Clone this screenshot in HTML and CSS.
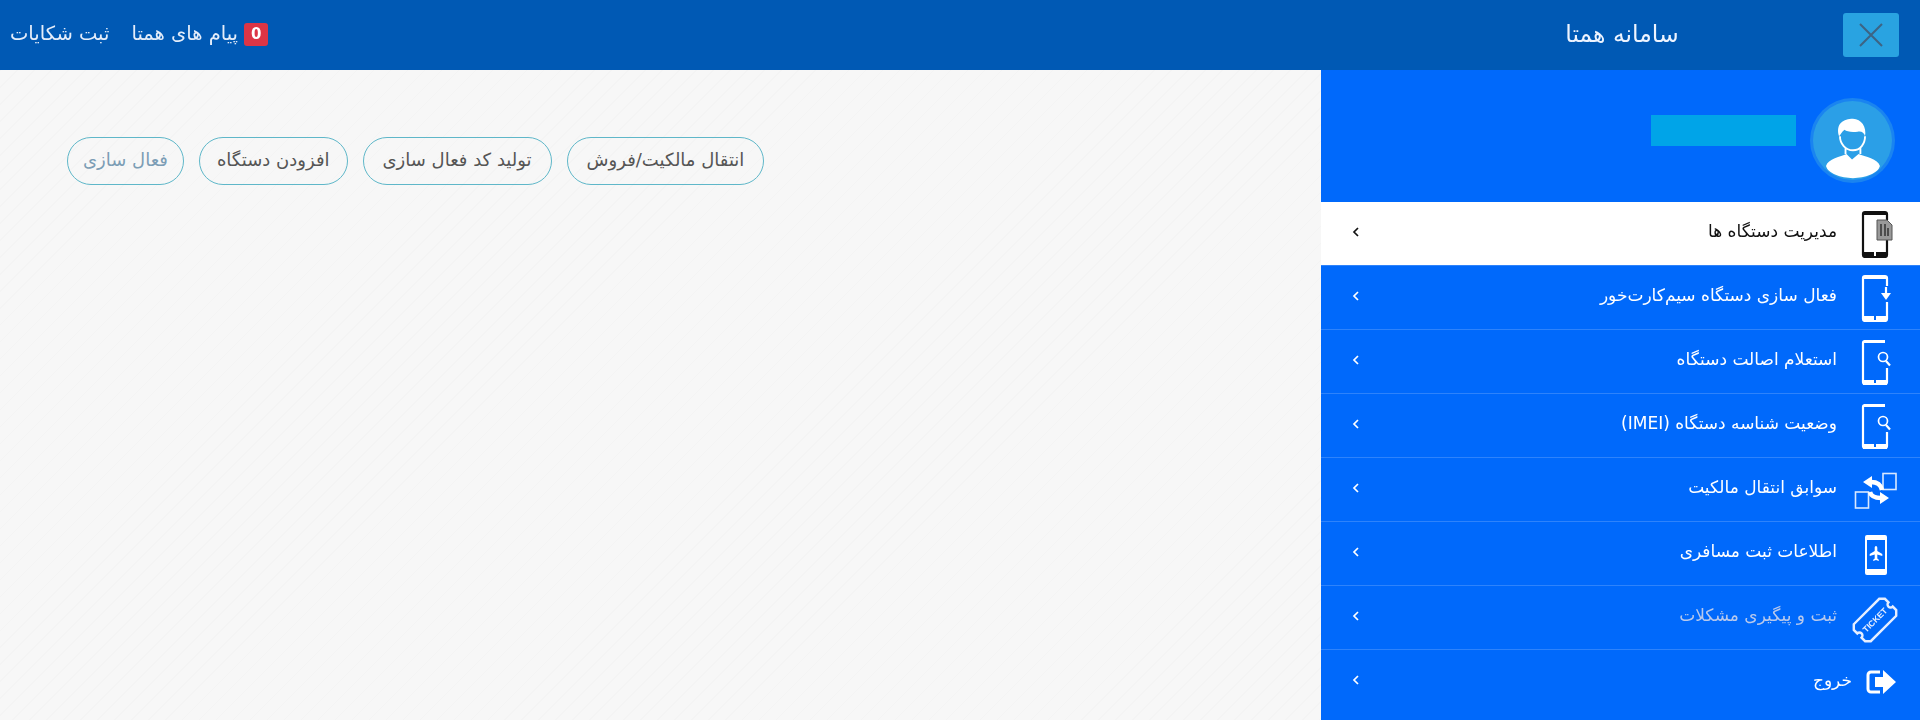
FILE: index.html
```html
<!DOCTYPE html>
<html lang="fa" dir="rtl">
<head>
    <meta charset="utf-8">
    <title>سامانه همتا</title>
    <link rel="stylesheet" href="styles.css">
</head>
<body>
    <svg class="icon-defs" aria-hidden="true">
        <symbol id="chevron" viewBox="0 0 8 12">
            <path d="M6 2 2 6l4 4" fill="none" stroke="currentColor" stroke-width="1.700"/>
        </symbol>
        <symbol id="phone-search" viewBox="0 0 48 48">
            <path d="M39 30v14a2 2 0 0 1-2 2H17a2 2 0 0 1-2-2V5a2 2 0 0 1 2-2h20" fill="none" stroke="currentColor" stroke-width="2.200"/>
            <path d="M16 2h21v3H16zM15 42h11v5H15zM28 42h11v5H28z" fill="currentColor"/>
            <circle cx="35" cy="19" r="4.500" fill="none" stroke="currentColor" stroke-width="1.700"/>
            <path d="m38 23 4 4.500" stroke="currentColor" stroke-width="2.200"/>
        </symbol>
    </svg>

    <header class="topbar">
        <div class="brand">
            <button class="close-btn" type="button" aria-label="بستن">
                <svg width="28" height="28" viewBox="0 0 28 28"><path d="M3 3l22 22M25 3 3 25" stroke="currentColor" stroke-width="2"/></svg>
            </button>
            <span class="brand-title">سامانه همتا</span>
        </div>
        <nav class="top-links">
            <a class="top-link" href="#"><span class="badge">0</span>پیام های همتا</a>
            <a class="top-link" href="#">ثبت شکایات</a>
        </nav>
    </header>

    <div class="layout">
        <aside class="sidebar">
            <div class="profile">
                <div class="avatar">
                    <svg viewBox="0 0 85 85">
                        <path d="M14 70c2-8 16-10 22-13l6 6 7-6c7 3 21 5 23 13-2 8-16 13-29 13S16 78 14 70z" fill="#fff"/>
                        <path d="M28 38c-4-14 5-19 15-19 9 0 15 9 13 19-1-4-4-6-8-5-6 1-12 0-14-2-3 2-4 5-6 7z" fill="#fff"/>
                        <path d="M29 38c0 8 6 15 14 15s13-7 13-15M35 50v7M51 50v7" fill="none" stroke="#fff" stroke-width="2"/>
                    </svg>
                </div>
                <div class="profile-name"></div>
            </div>
            <ul class="menu">
                <li class="menu-row menu-row-active">
                    <svg class="menu-icon" viewBox="0 0 48 48">
                        <path d="M39 10V4a2 2 0 0 0-2-2H17a2 2 0 0 0-2 2v41a2 2 0 0 0 2 2h20a2 2 0 0 0 2-2V30" fill="none" stroke="currentColor" stroke-width="2.200"/>
                        <path d="M15 2h24v3H15zM15 42h11v5H15zM28 42h11v5H28z" fill="currentColor"/>
                        <path d="M29 10h10l5 5v15H29z" fill="#999" stroke="#555"/>
                        <path d="M33 14v12M37 14v12M40 18v8" stroke="#333" stroke-width="1.500"/>
                    </svg>
                    <span class="menu-label">مدیریت دستگاه ها</span>
                    <svg class="menu-arrow"><use href="#chevron"/></svg>
                </li>
                <li class="menu-row">
                    <svg class="menu-icon" viewBox="0 0 48 48">
                        <path d="M39 12V4a2 2 0 0 0-2-2H17a2 2 0 0 0-2 2v41a2 2 0 0 0 2 2h20a2 2 0 0 0 2-2V28" fill="none" stroke="currentColor" stroke-width="2.200"/>
                        <path d="M15 2h24v3H15zM15 42h11v5H15zM28 42h11v5H28z" fill="currentColor"/>
                        <path d="M38 13v7" stroke="currentColor" stroke-width="2.200"/>
                        <path d="M33 19h10l-5 7z" fill="currentColor"/>
                    </svg>
                    <span class="menu-label">فعال سازی دستگاه سیم‌کارت‌خور</span>
                    <svg class="menu-arrow"><use href="#chevron"/></svg>
                </li>
                <li class="menu-row">
                    <svg class="menu-icon"><use href="#phone-search"/></svg>
                    <span class="menu-label">استعلام اصالت دستگاه</span>
                    <svg class="menu-arrow"><use href="#chevron"/></svg>
                </li>
                <li class="menu-row">
                    <svg class="menu-icon"><use href="#phone-search"/></svg>
                    <span class="menu-label">وضعیت شناسه دستگاه (IMEI)</span>
                    <svg class="menu-arrow"><use href="#chevron"/></svg>
                </li>
                <li class="menu-row">
                    <svg class="menu-icon menu-icon-wide" viewBox="0 0 48 48">
                        <rect x="35" y="7.500" width="13" height="16" fill="none" stroke="currentColor" stroke-width="1.600" opacity=".85"/>
                        <rect x="7.500" y="26" width="13" height="16" fill="none" stroke="currentColor" stroke-width="1.600" opacity=".85"/>
                        <path d="M34 24c-1-5-5-8-11-8M22 26c1 4 5 6 11 6" fill="none" stroke="currentColor" stroke-width="4.500"/>
                        <path d="M24 10l-9 6 9 6zM32 26l9 6-9 6z" fill="currentColor"/>
                    </svg>
                    <span class="menu-label">سوابق انتقال مالکیت</span>
                    <svg class="menu-arrow"><use href="#chevron"/></svg>
                </li>
                <li class="menu-row">
                    <svg class="menu-icon" viewBox="0 0 48 48">
                        <path d="M19 5h18a2 2 0 0 1 2 2v36a2 2 0 0 1-2 2H19a2 2 0 0 1-2-2V7a2 2 0 0 1 2-2zm0 5v29h18V10z" fill="currentColor" fill-rule="evenodd"/>
                        <path d="M28 16c1 0 1.300 1 1.300 2v3l5 3v2l-5-1.500v4l1.500 1.200V31L28 30l-2.800 1v-1.300l1.500-1.200v-4L21.700 26v-2l5-3v-3c0-1 .3-2 1.300-2z" fill="currentColor"/>
                    </svg>
                    <span class="menu-label">اطلاعات ثبت مسافری</span>
                    <svg class="menu-arrow"><use href="#chevron"/></svg>
                </li>
                <li class="menu-row menu-row-muted">
                    <svg class="menu-icon menu-icon-wide" viewBox="0 0 48 48">
                        <g transform="rotate(-45 27 26)">
                            <path d="M9 14h36l4 4v5a3 3 0 0 0 0 6v5l-4 4H9l-4-4v-5a3 3 0 0 0 0-6v-5z" fill="none" stroke="#e6eeff" stroke-width="2.400"/>
                            <text class="ticket-text" x="27" y="29" text-anchor="middle">TICKET</text>
                        </g>
                    </svg>
                    <span class="menu-label">ثبت و پیگیری مشکلات</span>
                    <svg class="menu-arrow"><use href="#chevron"/></svg>
                </li>
                <li class="menu-row menu-row-exit">
                    <svg class="menu-icon menu-icon-wide" viewBox="-2 0 44 48">
                        <path d="M26 14H17a3 3 0 0 0-3 3v14a3 3 0 0 0 3 3h9" fill="none" stroke="currentColor" stroke-width="3"/>
                        <path d="M21 19h8v-7l13 12-13 12v-7h-8z" fill="currentColor"/>
                    </svg>
                    <span class="menu-label">خروج</span>
                    <svg class="menu-arrow"><use href="#chevron"/></svg>
                </li>
            </ul>
        </aside>

        <main class="content">
            <div class="actions">
                <a class="pill pill-long" href="#">انتقال مالکیت/فروش</a>
                <a class="pill pill-long" href="#">تولید کد فعال سازی</a>
                <a class="pill pill-mid" href="#">افزودن دستگاه</a>
                <a class="pill pill-active" href="#">فعال سازی</a>
            </div>
        </main>
    </div>
</body>
</html>
```

FILE: styles.css
```css
html, body {
    margin: 0;
    height: 100%;
}
body {
    display: flex;
    flex-direction: column;
    overflow: hidden;
    font-family: "DejaVu Sans", "Noto Sans", sans-serif;
    background-color: #f7f7f7;
    filter: blur(0.5px);
}
.icon-defs {
    display: none;
}

/* top bar */
.topbar {
    display: flex;
    justify-content: space-between;
    align-items: center;
    height: 70px;
    flex-shrink: 0;
    background-color: #0059b4;
    color: #fff;
}
.brand {
    display: grid;
    grid-template-columns: 1fr auto 1fr;
    align-items: center;
    width: 599px;
    box-sizing: border-box;
    padding: 0 21px 0 24px;
}
.close-btn {
    justify-self: start;
    display: flex;
    align-items: center;
    justify-content: center;
    width: 56px;
    height: 44px;
    padding: 0;
    border: none;
    border-radius: 3px;
    background-color: #29a3e1;
    color: #3d6484;
}
.brand-title {
    font-size: 23.500px;
    line-height: 1;
    color: #eef4ff;
}
.top-links {
    display: flex;
    gap: 22px;
    padding-left: 10px;
    padding-bottom: 2px;
}
.top-link {
    display: flex;
    align-items: center;
    gap: 6px;
    font-size: 19.500px;
    line-height: 1;
    color: #e4edfa;
    text-decoration: none;
}
.badge {
    display: inline-block;
    padding: 4px 7px;
    border-radius: 3px;
    background-color: #dc3545;
    color: #fff;
    font-size: 15px;
    font-weight: bold;
}

/* sidebar */
.layout {
    display: flex;
    flex: 1;
    min-height: 0;
}
.sidebar {
    width: 599px;
    flex-shrink: 0;
    background-color: #0069fb;
}
.profile {
    display: flex;
    align-items: center;
    gap: 17px;
    height: 132px;
    box-sizing: border-box;
    padding: 8px 28px 0 0;
}
.avatar {
    width: 79px;
    height: 79px;
    border-radius: 50%;
    background-color: #2b9fe7;
    box-shadow: 0 0 0 3px #1a84f0;
}
.avatar svg {
    display: block;
}
.profile-name {
    width: 145px;
    height: 31px;
    margin-bottom: 19px;
    background-color: #00a4e8;
}
.menu {
    margin: 0;
    padding: 0;
    list-style: none;
}
.menu-row {
    display: flex;
    align-items: center;
    gap: 11px;
    height: 64px;
    box-sizing: border-box;
    padding: 0 24px 0 31px;
    border-bottom: 1px solid #2e83fb;
    color: #fff;
    font-size: 17px;
}
.menu-row:last-child {
    border-bottom: none;
}
.menu-row-active {
    background-color: #fff;
    color: #111;
}
.menu-row-muted .menu-label {
    color: #b8c9ec;
}
.menu-label {
    padding-bottom: 5px;
}
.menu-icon {
    width: 48px;
    height: 48px;
    flex-shrink: 0;
}
.menu-icon-wide {
    overflow: visible;
}
.ticket-text {
    font-family: "Liberation Sans", sans-serif;
    font-size: 8.500px;
    font-weight: bold;
    fill: #e6eeff;
}
.menu-row-exit {
    gap: 0;
}
.menu-row-exit .menu-icon {
    width: 44px;
}
.menu-arrow {
    width: 8px;
    height: 12px;
    margin-right: auto;
    margin-bottom: 4px;
}

/* main area */
.content {
    flex: 1;
    padding: 67px 67px 0;
    background-color: #f7f7f7;
    background-image: repeating-linear-gradient(135deg, #f4f4f4 0, #f4f4f4 1px, transparent 1px, transparent 12px);
}
.actions {
    display: flex;
    justify-content: flex-end;
    gap: 15px;
}
.pill {
    display: flex;
    align-items: center;
    height: 48px;
    box-sizing: border-box;
    padding: 0 15px 4px;
    border: 1px solid #5fb7c9;
    border-radius: 24px;
    color: #555;
    font-size: 18px;
    text-decoration: none;
}
.pill-long {
    padding-left: 19px;
    padding-right: 19px;
}
.pill-mid {
    padding-left: 17px;
    padding-right: 17px;
}
.pill-active {
    color: #7c9db5;
}
```
